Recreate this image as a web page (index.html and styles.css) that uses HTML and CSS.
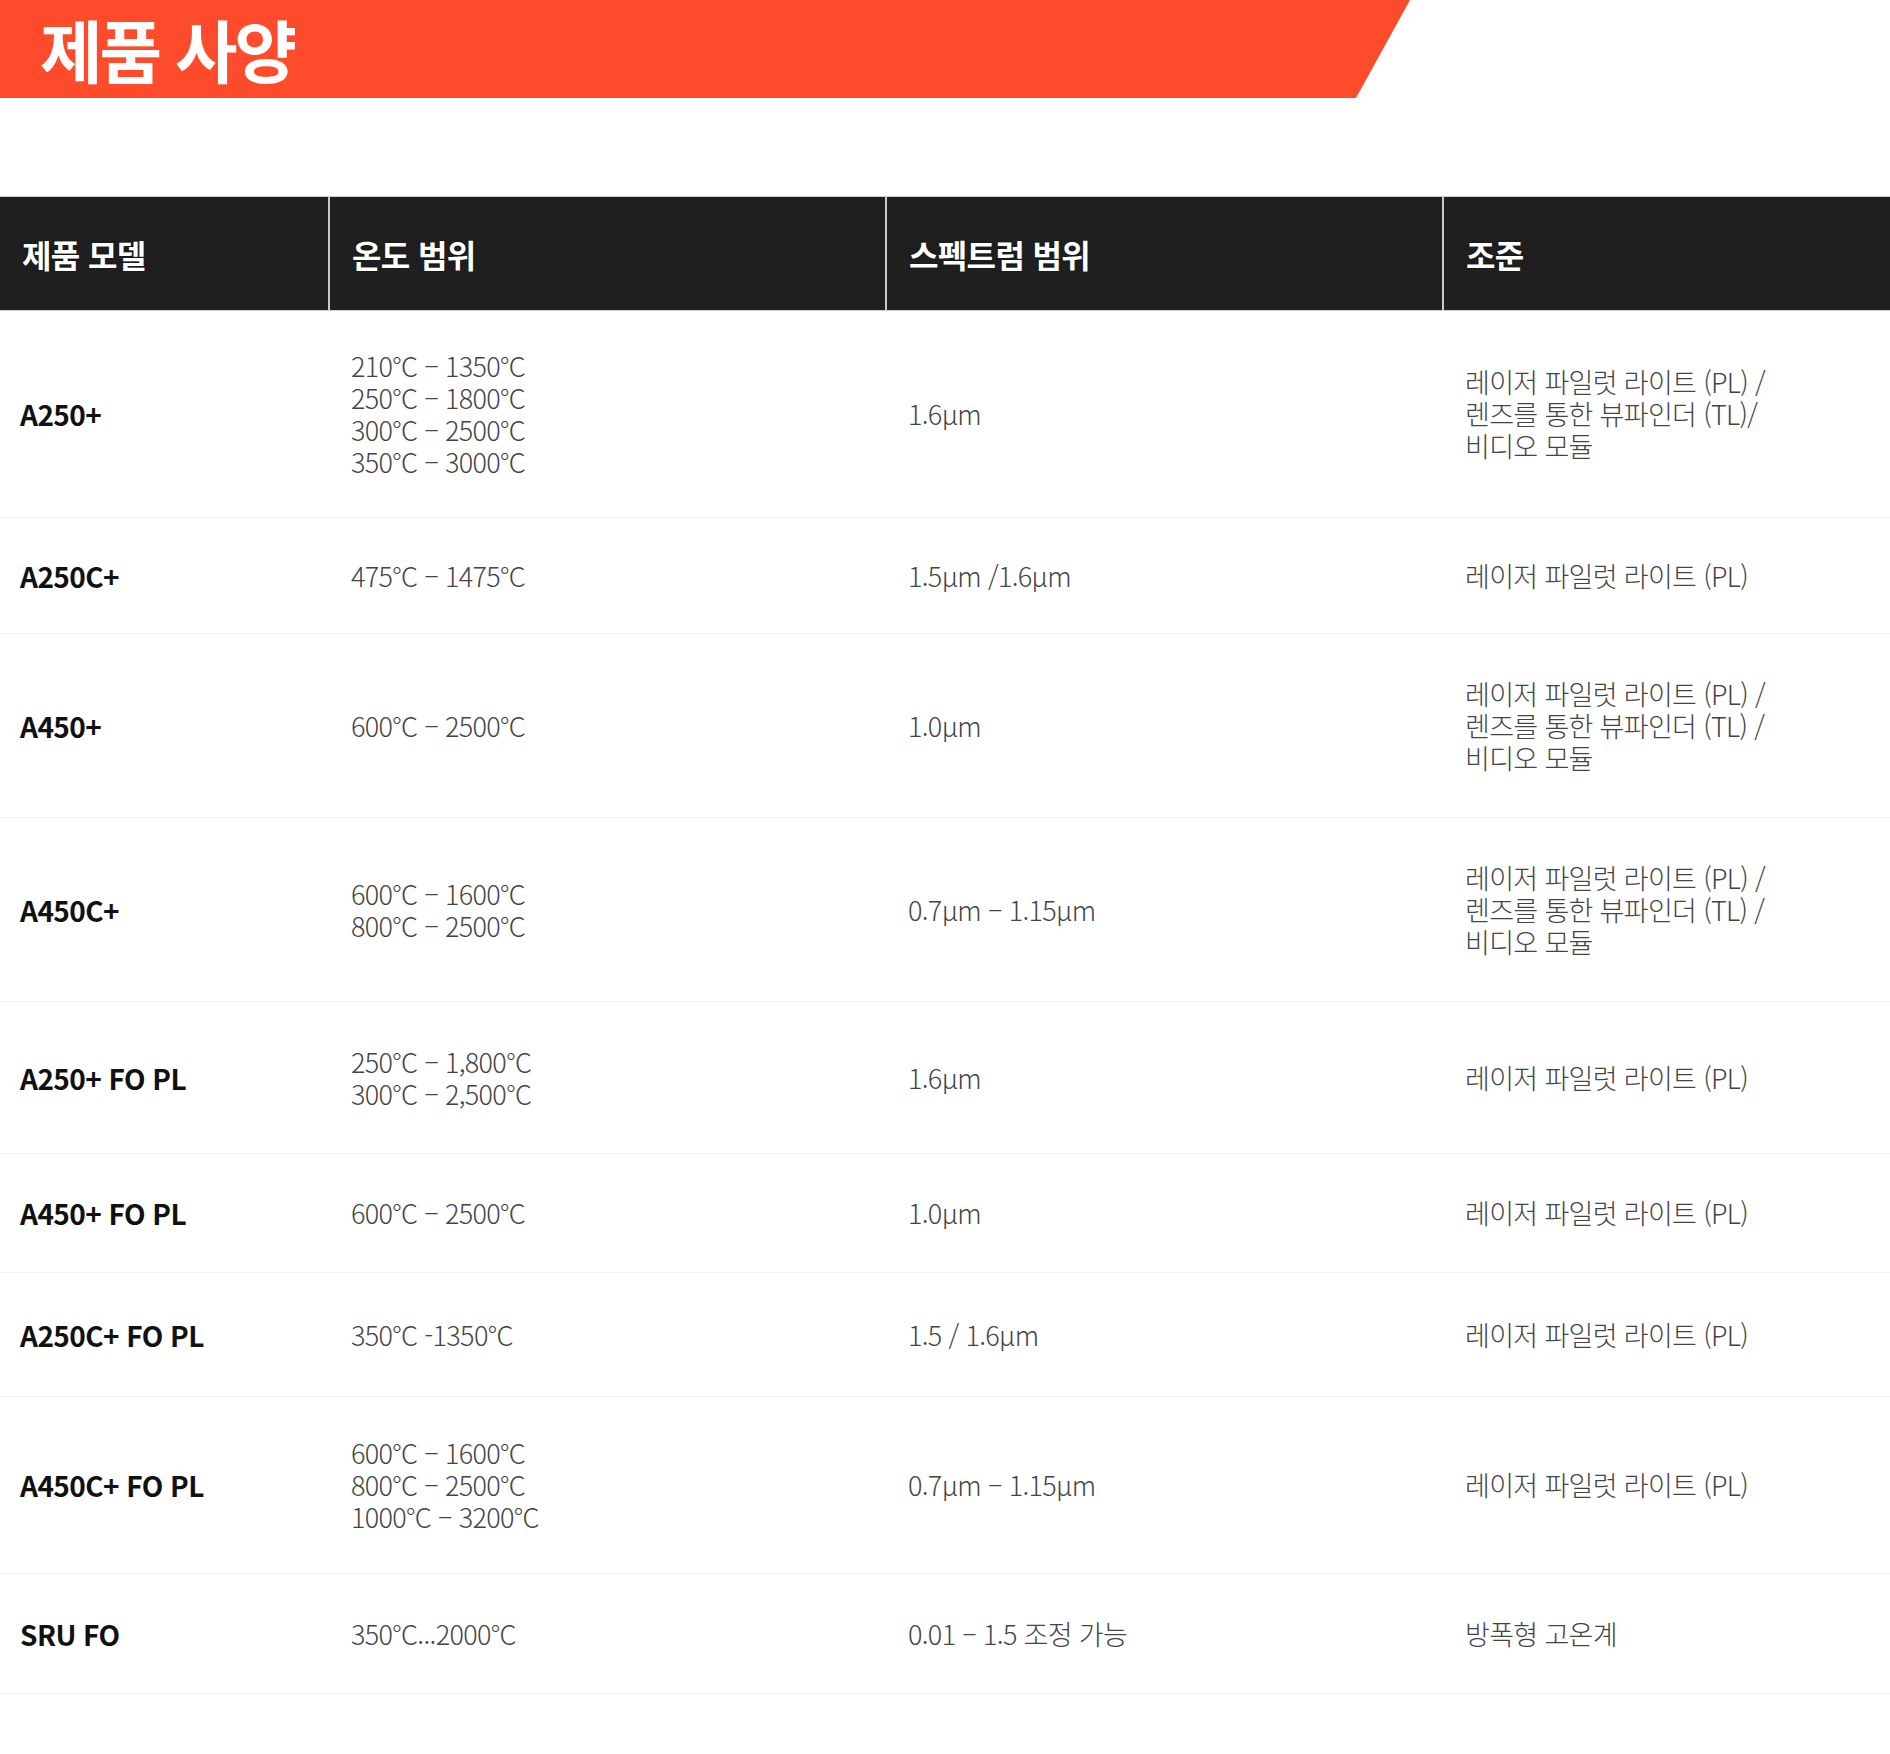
FILE: index.html
```html
<!DOCTYPE html>
<html lang="ko">
<head>
<meta charset="utf-8">
<title>제품 사양</title>
<link rel="stylesheet" href="styles.css">
</head>
<body>
<div class="banner"><h1 class="title">제품 사양</h1></div>
<table class="spec">
  <colgroup>
    <col class="c1"><col class="c2"><col class="c3"><col class="c4">
  </colgroup>
  <thead>
    <tr><th>제품 모델</th><th>온도 범위</th><th>스펙트럼 범위</th><th>조준</th></tr>
  </thead>
  <tbody>
    <tr>
      <td class="model">A250+</td>
      <td>210°C – 1350°C<br>250°C – 1800°C<br>300°C – 2500°C<br>350°C – 3000°C</td>
      <td>1.6µm</td>
      <td>레이저 파일럿 라이트 (PL) /<br>렌즈를 통한 뷰파인더 (TL)/<br>비디오 모듈</td>
    </tr>
    <tr>
      <td class="model">A250C+</td>
      <td>475°C – 1475°C</td>
      <td>1.5µm /1.6µm</td>
      <td>레이저 파일럿 라이트 (PL)</td>
    </tr>
    <tr>
      <td class="model">A450+</td>
      <td>600°C – 2500°C</td>
      <td>1.0µm</td>
      <td>레이저 파일럿 라이트 (PL) /<br>렌즈를 통한 뷰파인더 (TL) /<br>비디오 모듈</td>
    </tr>
    <tr>
      <td class="model">A450C+</td>
      <td>600°C – 1600°C<br>800°C – 2500°C</td>
      <td>0.7µm – 1.15µm</td>
      <td>레이저 파일럿 라이트 (PL) /<br>렌즈를 통한 뷰파인더 (TL) /<br>비디오 모듈</td>
    </tr>
    <tr>
      <td class="model">A250+ FO PL</td>
      <td>250°C – 1,800°C<br>300°C – 2,500°C</td>
      <td>1.6µm</td>
      <td>레이저 파일럿 라이트 (PL)</td>
    </tr>
    <tr>
      <td class="model">A450+ FO PL</td>
      <td>600°C – 2500°C</td>
      <td>1.0µm</td>
      <td>레이저 파일럿 라이트 (PL)</td>
    </tr>
    <tr>
      <td class="model">A250C+ FO PL</td>
      <td>350°C -1350°C</td>
      <td>1.5 / 1.6µm</td>
      <td>레이저 파일럿 라이트 (PL)</td>
    </tr>
    <tr>
      <td class="model">A450C+ FO PL</td>
      <td>600°C – 1600°C<br>800°C – 2500°C<br>1000°C – 3200°C</td>
      <td>0.7µm – 1.15µm</td>
      <td>레이저 파일럿 라이트 (PL)</td>
    </tr>
    <tr>
      <td class="model">SRU FO</td>
      <td>350°C...2000°C</td>
      <td>0.01 – 1.5 조정 가능</td>
      <td>방폭형 고온계</td>
    </tr>
  </tbody>
</table>
</body>
</html>
```

FILE: styles.css
```css
html, body {
  margin: 0;
  padding: 0;
  background: #ffffff;
}

body {
  font-family: "Noto Sans CJK KR", "Noto Sans", sans-serif;
  color: #3a3a3a;
}

.banner {
  box-sizing: border-box;
  width: 1410px;
  height: 98px;
  margin-bottom: 98px;
  padding-left: 40px;
  display: flex;
  align-items: center;
  background: #fe4b2b;
  clip-path: polygon(0 0, 100% 0, 1356px 100%, 0 100%);
}

.title {
  margin: 0;
  color: #ffffff;
  font-size: 68px;
  font-weight: 700;
  line-height: 1;
  letter-spacing: -0.045em;
}

.spec {
  width: 1890px;
  table-layout: fixed;
  border-collapse: collapse;
  border-spacing: 0;
}

.c1 { width: 329px; }
.c2 { width: 557px; }
.c3 { width: 557px; }
.c4 { width: 447px; }

.spec th {
  height: 113px;
  padding: 0 0 0 22px;
  background: #1f1f1f;
  color: #ffffff;
  text-align: left;
  font-size: 32px;
  font-weight: 700;
  letter-spacing: -0.02em;
  border-top: 1px solid #cfcfcf;
  border-bottom: 1px solid #cfcfcf;
  text-shadow: 0 0 2px rgba(0, 0, 0, 0.6);
}

.spec th + th {
  border-left: 2px solid #c9c9c9;
}

.spec td {
  padding: 0 0 0 22px;
  vertical-align: middle;
  font-size: 27px;
  line-height: 32px;
  font-weight: 300;
  color: #444444;
  letter-spacing: -0.025em;
  border-bottom: 1px solid #efefef;
}

.spec td.model {
  padding-left: 20px;
  font-size: 28px;
  font-weight: 700;
  color: #111111;
  letter-spacing: -0.02em;
}

.spec tbody tr:nth-child(1) td { height: 206px; }
.spec tbody tr:nth-child(2) td { height: 115px; }
.spec tbody tr:nth-child(3) td { height: 183px; }
.spec tbody tr:nth-child(4) td { height: 183px; }
.spec tbody tr:nth-child(5) td { height: 151px; }
.spec tbody tr:nth-child(6) td { height: 118px; }
.spec tbody tr:nth-child(7) td { height: 123px; }
.spec tbody tr:nth-child(8) td { height: 176px; }
.spec tbody tr:nth-child(9) td { height: 119px; }
```
